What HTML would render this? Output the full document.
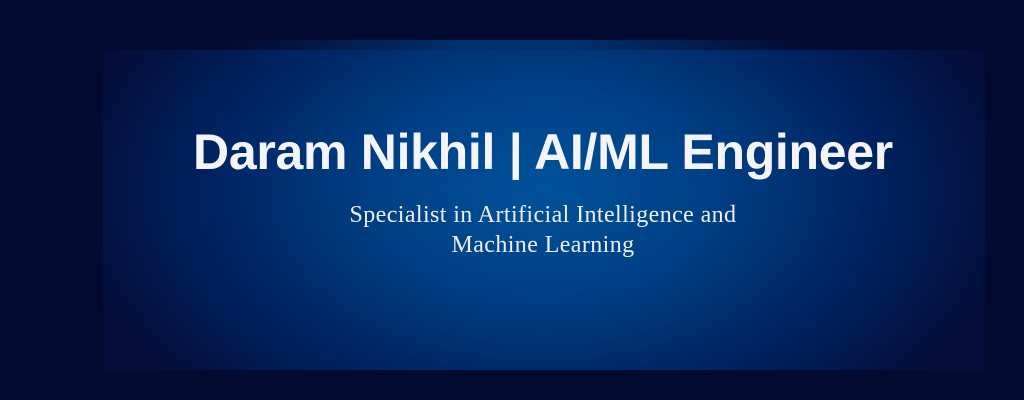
<!DOCTYPE html>
<html><head><style>
html,body{margin:0;padding:0}
body{width:1024px;height:400px;background:#030a2f;position:relative;overflow:hidden}
.band{position:absolute;left:228px;top:40px;width:580px;height:12px;background:linear-gradient(90deg,#030a2f,#00306e 40%,#00306e 60%,#030a2f)}
.box{position:absolute;left:103px;top:50px;width:882px;height:320px;background:radial-gradient(ellipse 480px 300px at 440px 140px,#00529b 0%,#003f85 35%,#002260 70%,#030d38 100%)}
h1{position:absolute;left:0;width:1086px;top:123px;margin:0;text-align:center;color:#f4f5fa;font:bold 50px "Liberation Sans",sans-serif;letter-spacing:-0.3px}
p{position:absolute;left:0;width:1086px;top:200px;margin:0;text-align:center;color:#eef0f8;font:24px/30px "Liberation Serif",serif;letter-spacing:0.4px}
</style></head><body>
<div class="band"></div><div class="box"></div>
<h1>Daram Nikhil | AI/ML Engineer</h1>
<p>Specialist in Artificial Intelligence and<br>Machine Learning</p>
</body></html>
